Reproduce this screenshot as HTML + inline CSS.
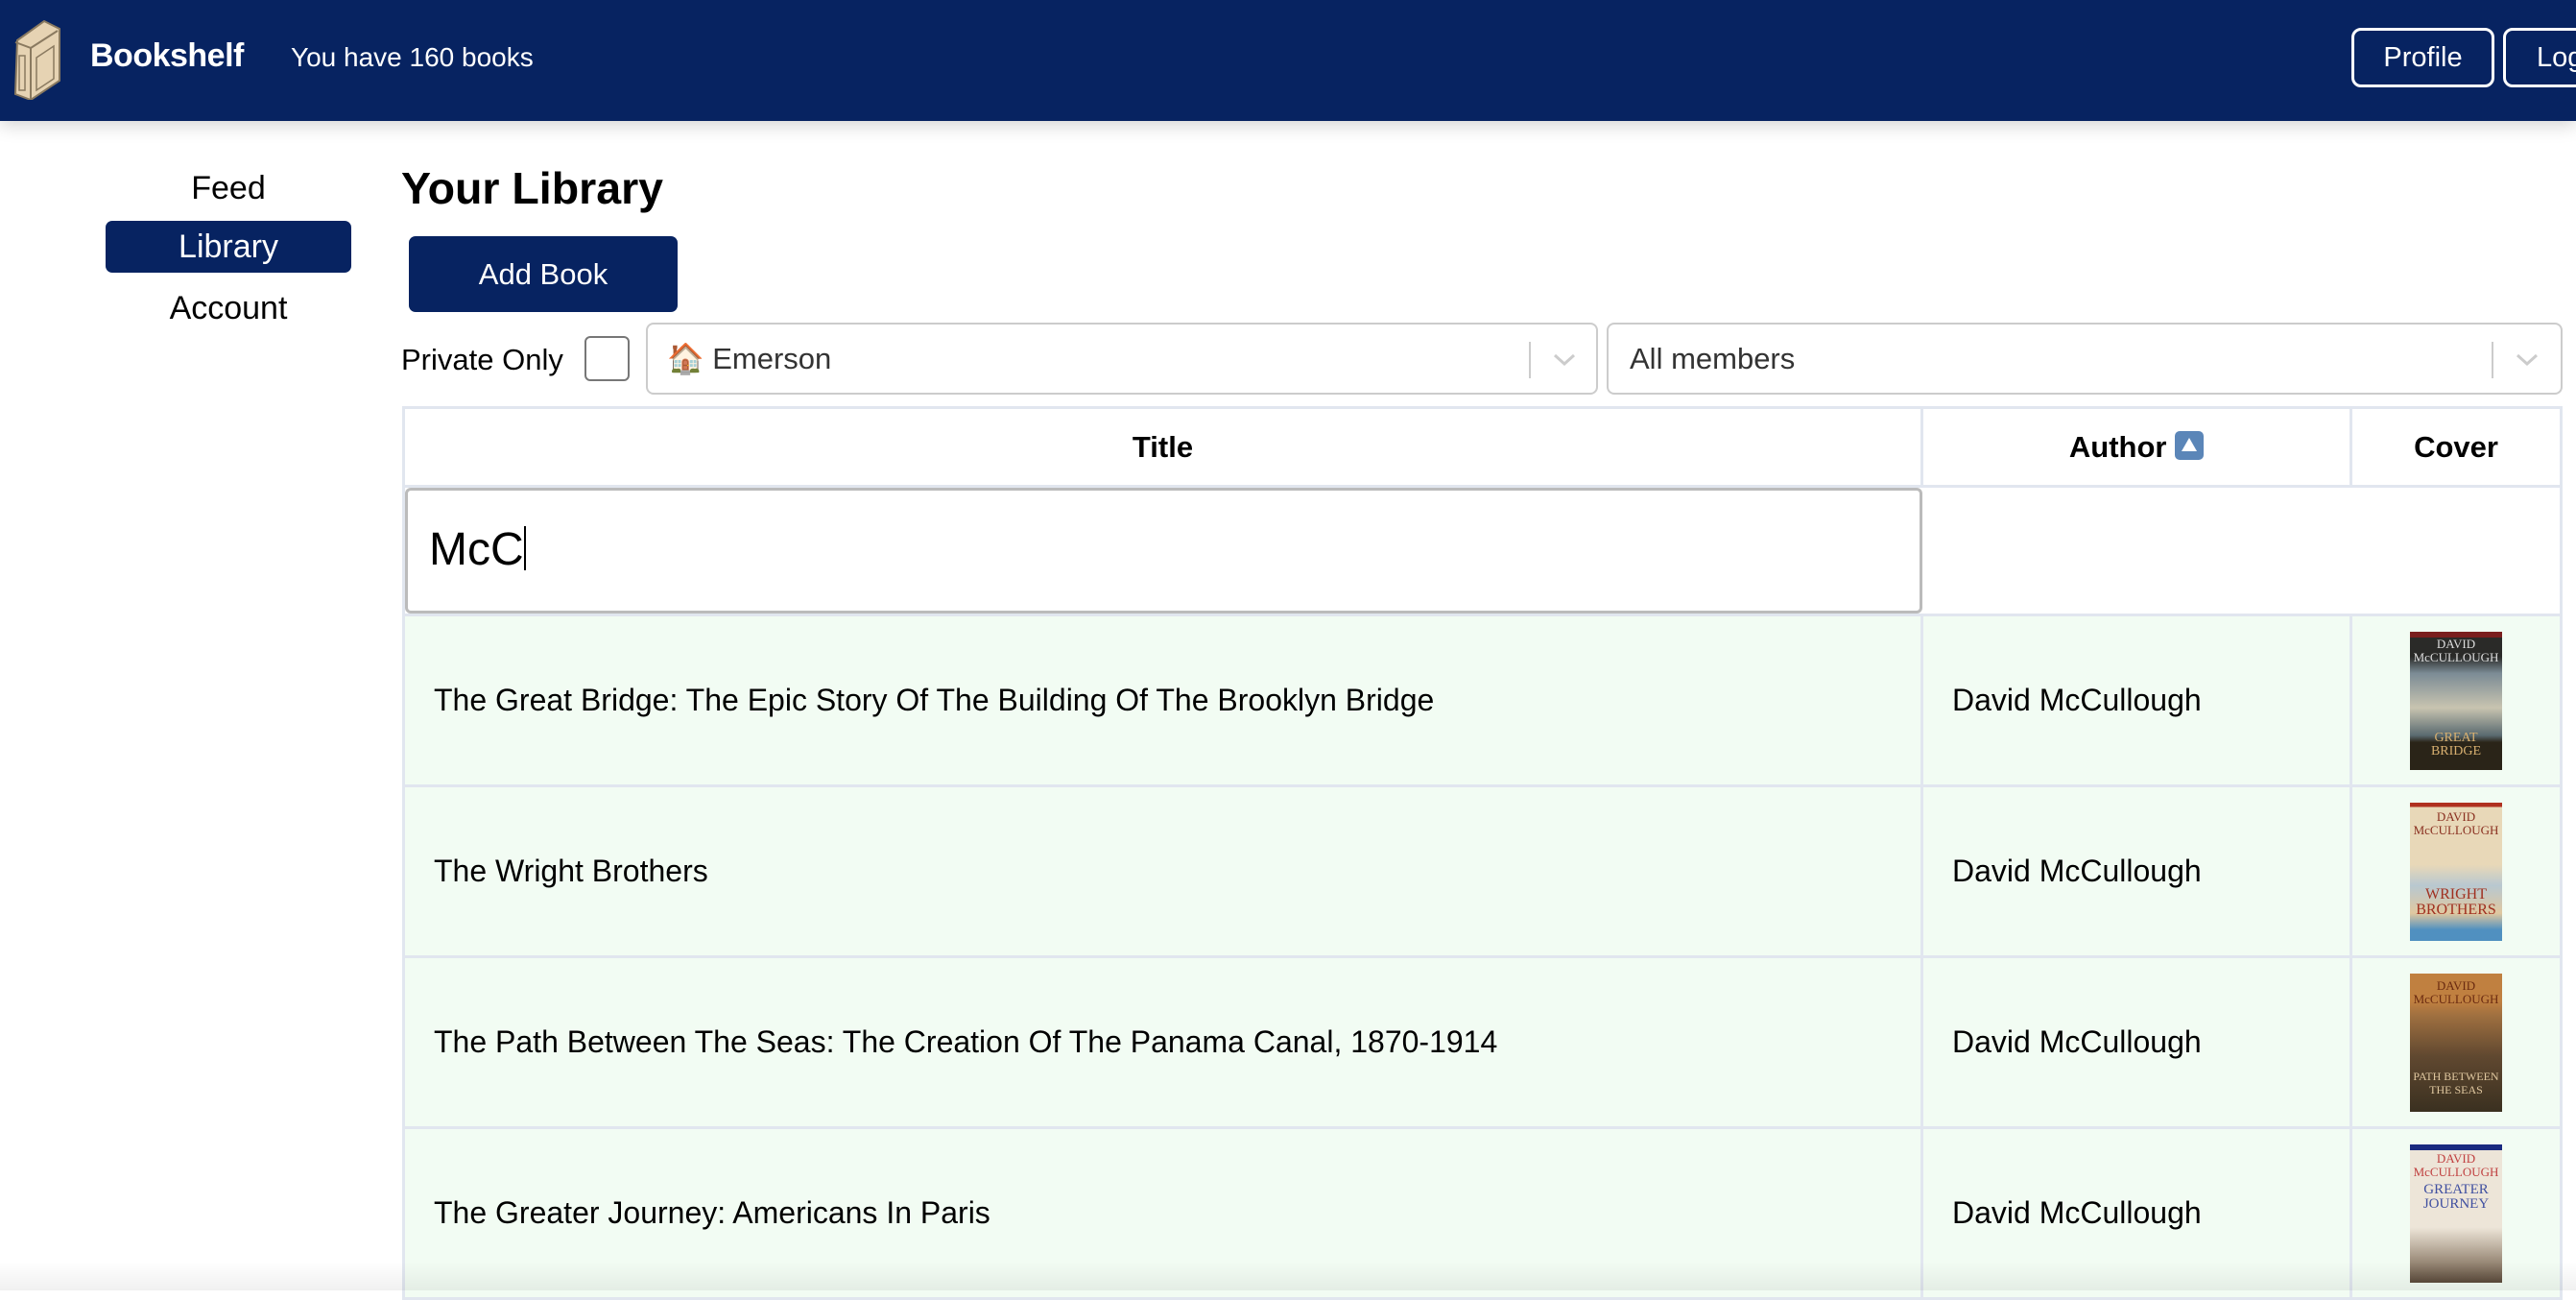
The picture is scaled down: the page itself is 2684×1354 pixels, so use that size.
<!DOCTYPE html>
<html><head><meta charset="utf-8"><style>
*{box-sizing:border-box;margin:0;padding:0}
body{width:2684px;height:1344px;overflow:hidden;background:#fff;font-family:"Liberation Sans",Arial,sans-serif;color:#000;position:relative}
.hdr{position:absolute;left:0;top:0;width:2684px;height:126px;background:#072361;box-shadow:0 4px 18px rgba(0,0,0,.18)}
.abs{position:absolute;white-space:nowrap}
.btn{position:absolute;border:3px solid #fff;border-radius:10px;color:#fff;font-size:29px;display:flex;align-items:center;justify-content:center;height:62px;top:29px}
.nav{position:absolute;font-size:34px;width:256px;left:110px;text-align:center}
.sel{position:absolute;top:336px;height:75px;border:2px solid #ccc;border-radius:8px;background:#fff;font-size:31px;color:#333;display:flex;align-items:center}
.sel .sep{position:absolute;top:18px;width:2px;height:38px;background:#ccc}
.sel svg{position:absolute;top:27px}
table{position:absolute;left:419px;top:423px;width:2251px;border-collapse:collapse}
td,th{border:3px solid #e1e6ef}
th{height:82px;font-size:31px;font-weight:bold}
.row td{height:178px;background:#f2fcf3;font-size:32px;padding-left:30px}
.cov{width:96px;height:144px;margin:0 auto;position:relative;overflow:hidden;font-family:"Liberation Serif",serif;text-align:center;font-size:13px;line-height:14px}
</style></head><body>
<div class="hdr">
<svg class="abs" style="left:12px;top:20px" width="52" height="84" viewBox="0 0 52 84"><path d="M6 22 L34 2 L50 10 L50 64 L20 84 L4 78 Z" fill="#e6d3b3" stroke="#8a7a60" stroke-width="2"/><path d="M4 24 L20 30 L20 84" fill="none" stroke="#8a7a60" stroke-width="2"/><path d="M20 30 L48 12" stroke="#8a7a60" stroke-width="2"/><rect x="8" y="38" width="6" height="36" fill="none" stroke="#8a7a60" stroke-width="1.5"/><path d="M26 40 L44 28 L44 62 L26 74 Z" fill="none" stroke="#8a7a60" stroke-width="1.5"/></svg>
<div class="abs" style="left:94px;top:39px;font-size:34px;font-weight:bold;color:#fff;letter-spacing:-0.5px">Bookshelf</div>
<div class="abs" style="left:303px;top:44px;font-size:28px;color:#fff">You have 160 books</div>
<div class="btn" style="left:2450px;width:149px">Profile</div>
<div class="btn" style="left:2608px;width:120px;justify-content:flex-start;padding-left:32px">Log</div>
</div>
<div class="nav" style="top:177px">Feed</div>
<div class="nav" style="top:230px;height:54px;background:#072361;color:#fff;border-radius:7px;line-height:54px">Library</div>
<div class="nav" style="top:302px">Account</div>
<div class="abs" style="left:418px;top:169px;font-size:46.5px;font-weight:bold">Your Library</div>
<div class="abs" style="left:426px;top:246px;width:280px;height:79px;background:#072361;border-radius:7px;color:#fff;font-size:31px;display:flex;align-items:center;justify-content:center">Add Book</div>
<div class="abs" style="left:418px;top:357px;font-size:31px">Private Only</div>
<div class="abs" style="left:609px;top:350px;width:47px;height:47px;border:2px solid #777;border-radius:6px"></div>
<div class="sel" style="left:673px;width:992px;padding-left:20px">🏠 Emerson<div class="sep" style="left:918px"></div><svg style="left:942px" width="26" height="20" viewBox="0 0 26 20"><path d="M3 5 L13 14 L23 5" fill="none" stroke="#ccc" stroke-width="3"/></svg></div>
<div class="sel" style="left:1674px;width:996px;padding-left:22px">All members<div class="sep" style="left:920px"></div><svg style="left:944px" width="26" height="20" viewBox="0 0 26 20"><path d="M3 5 L13 14 L23 5" fill="none" stroke="#ccc" stroke-width="3"/></svg></div>
<table>
<tr><th style="width:1582px">Title</th><th style="width:447px">Author <span style="display:inline-block;width:30px;height:30px;background:#5b86b8;border-radius:5px;vertical-align:-3px;position:relative"><span style="position:absolute;left:7px;top:7px;border-left:8px solid transparent;border-right:8px solid transparent;border-bottom:14px solid #fff"></span></span></th><th>Cover</th></tr>
<tr><td style="height:134px;padding:0;position:relative;border-right:none"><div style="position:absolute;left:0;top:0;right:0;bottom:0;border:3px solid #bbb;border-radius:6px;font-size:48px;padding-left:22px;line-height:124px">McC<span style="display:inline-block;width:2px;height:46px;background:#000;vertical-align:-6px"></span></div></td><td colspan="2" style="border-left:none"></td></tr>
<tr class="row"><td>The Great Bridge: The Epic Story Of The Building Of The Brooklyn Bridge</td><td>David McCullough</td><td style="padding:0"><div class="cov" style="background:linear-gradient(#7a1e1e 0 4%,#2a2a28 4% 18%,#7b8b95 30%,#c8c4b0 55%,#5a6a70 75%,#2a2418 80%);color:#ddd;padding-top:6px">DAVID<br>McCULLOUGH<div style="position:absolute;bottom:12px;width:100%;color:#d8b070;font-size:14px">GREAT BRIDGE</div></div></td></tr>
<tr class="row"><td>The Wright Brothers</td><td>David McCullough</td><td style="padding:0"><div class="cov" style="background:linear-gradient(#b03020 0 3%,#e8d8b8 3% 45%,#b8c8d0 60%,#e0c8a0 80%,#5090c0 92%);color:#8a3020;padding-top:8px">DAVID<br>McCULLOUGH<div style="position:absolute;bottom:24px;width:100%;color:#a03020;font-size:16px;line-height:16px">WRIGHT<br>BROTHERS</div></div></td></tr>
<tr class="row"><td>The Path Between The Seas: The Creation Of The Panama Canal, 1870-1914</td><td>David McCullough</td><td style="padding:0"><div class="cov" style="background:linear-gradient(#c08040 0 20%,#a07040 30%,#604830 60%,#3a3020);color:#6a2a10;padding-top:6px">DAVID<br>McCULLOUGH<div style="position:absolute;bottom:16px;width:100%;color:#e0c8a0;font-size:12px">PATH BETWEEN<br>THE SEAS</div></div></td></tr>
<tr class="row"><td>The Greater Journey: Americans In Paris</td><td>David McCullough</td><td style="padding:0"><div class="cov" style="background:linear-gradient(#1a2a80 0 4%,#ede5d8 4% 60%,#9a8a78 85%,#5a4a3a);color:#c04040;padding-top:8px">DAVID<br>McCULLOUGH<div style="color:#4050a0;font-size:15px;line-height:15px;margin-top:4px">GREATER<br>JOURNEY</div></div></td></tr>
</table>
<div style="position:absolute;left:0;bottom:0;width:2684px;height:30px;background:linear-gradient(rgba(0,0,0,0),rgba(0,0,0,.06))"></div>
</body></html>
